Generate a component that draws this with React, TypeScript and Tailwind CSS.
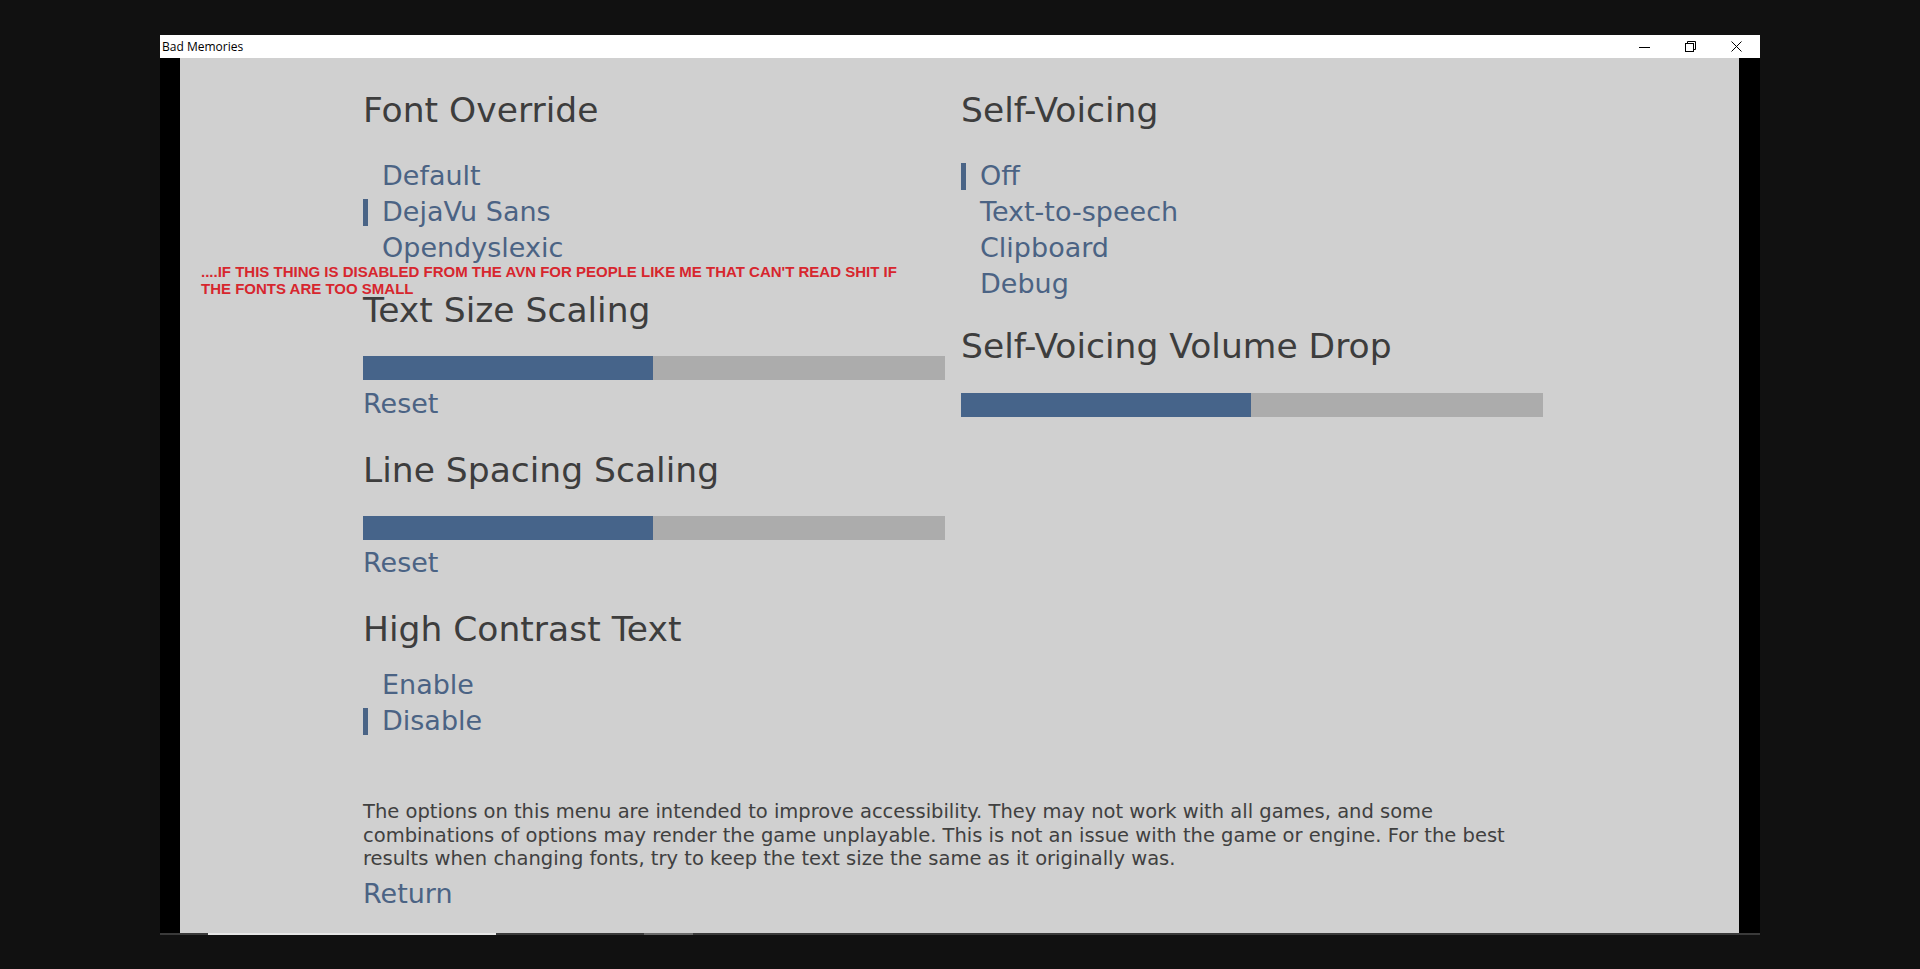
const game = { fontFamily: '"DejaVu Sans", "Liberation Sans", sans-serif' };

type Opt = { label: string; on?: boolean };

const fontOpts: Opt[] = [{ label: "Default" }, { label: "DejaVu Sans", on: true }, { label: "Opendyslexic" }];
const voiceOpts: Opt[] = [{ label: "Off", on: true }, { label: "Text-to-speech" }, { label: "Clipboard" }, { label: "Debug" }];
const contrastOpts: Opt[] = [{ label: "Enable" }, { label: "Disable", on: true }];

function Heading({ children, className = "" }: { children: string; className?: string }) {
  return <h2 className={`text-[34.5px] leading-[41px] text-[#3d3d3d] whitespace-nowrap ${className}`}>{children}</h2>;
}

function Options({ items, className = "" }: { items: Opt[]; className?: string }) {
  return (
    <div className={`flex flex-col ${className}`}>
      {items.map((o) => (
        <div key={o.label} className="flex items-center h-[36px]">
          <div className={`w-[5px] h-[27px] ${o.on ? "bg-[#4a6486]" : "bg-transparent"}`} />
          <span className="ml-[14px] text-[27px] leading-[36px] text-[#4b6384] whitespace-nowrap">{o.label}</span>
        </div>
      ))}
    </div>
  );
}

function Slider({ className = "" }: { className?: string }) {
  return (
    <div className={`w-[582px] h-[24px] bg-[#acacac] ${className}`}>
      <div className="w-[290px] h-full bg-[#46648a]" />
    </div>
  );
}

function Link({ children, className = "" }: { children: string; className?: string }) {
  return <div className={`text-[27px] leading-[36px] text-[#4b6384] ${className}`}>{children}</div>;
}

export default function App() {
  return (
    <div className="w-[1920px] h-[969px] bg-[#111111] pt-[35px] pl-[160px] overflow-hidden">
      <div className="w-[1600px] flex flex-col">
        {/* title bar */}
        <div className="h-[23px] bg-white flex items-center justify-between">
          <span className="pl-[2px] text-[12px] text-black" style={{ fontFamily: '"Open Sans", "Noto Sans", sans-serif' }}>
            Bad Memories
          </span>
          <div className="flex h-full">
            <div className="w-[46px] h-full flex items-center justify-center">
              <svg width="11" height="10" viewBox="0 0 11 10">
                <path d="M0 5.5h11" stroke="#000" strokeWidth="1" />
              </svg>
            </div>
            <div className="w-[46px] h-full flex items-center justify-center">
              <svg width="11" height="11" viewBox="0 0 11 11" fill="none" stroke="#000" strokeWidth="1">
                <rect x="0.5" y="2.5" width="8" height="8" />
                <path d="M2.5 2.5V0.5h8v8h-2" />
              </svg>
            </div>
            <div className="w-[46px] h-full flex items-center justify-center mr-[1px]">
              <svg width="11" height="11" viewBox="0 0 11 11" stroke="#000" strokeWidth="1">
                <path d="M0.5 0.5l10 10M10.5 0.5l-10 10" />
              </svg>
            </div>
          </div>
        </div>

        {/* window body */}
        <div className="h-[875px] flex">
          <div className="w-[20px] bg-black" />
          <div className="relative flex-1 bg-[#d0d0d0] pl-[183px] pt-[32px]" style={game}>
            <div className="grid grid-cols-[582px_582px] gap-x-[16px] items-start">
              <div className="flex flex-col">
                <Heading>Font Override</Heading>
                <Options items={fontOpts} className="mt-[27px]" />
                <Heading className="mt-[24px]">Text Size Scaling</Heading>
                <Slider className="mt-[25px]" />
                <Link className="mt-[6px]">Reset</Link>
                <Heading className="mt-[28px]">Line Spacing Scaling</Heading>
                <Slider className="mt-[25px]" />
                <Link className="mt-[5px]">Reset</Link>
                <Heading className="mt-[28px]">High Contrast Text</Heading>
                <Options items={contrastOpts} className="mt-[17px]" />
              </div>
              <div className="flex flex-col">
                <Heading>Self-Voicing</Heading>
                <Options items={voiceOpts} className="mt-[27px]" />
                <Heading className="mt-[24px]">Self-Voicing Volume Drop</Heading>
                <Slider className="mt-[26px]" />
              </div>
            </div>

            <p className="mt-[61px] w-[1180px] text-[19.5px] leading-[23.5px] text-[#404040]">
              The options on this menu are intended to improve accessibility. They may not work with all games, and some
              combinations of options may render the game unplayable. This is not an issue with the game or engine. For the
              best results when changing fonts, try to keep the text size the same as it originally was.
            </p>
            <Link className="mt-[5px]">Return</Link>

            {/* annotation pasted over the screenshot */}
            <div
              className="absolute left-[21px] top-[205px] text-[15px] leading-[17px] font-bold text-[#d7262e] whitespace-nowrap"
              style={{ fontFamily: '"Liberation Sans", Arial, sans-serif' }}
            >
              ....IF THIS THING IS DISABLED FROM THE AVN FOR PEOPLE LIKE ME THAT CAN'T READ SHIT IF
              <br />
              THE FONTS ARE TOO SMALL
            </div>
          </div>
          <div className="w-[21px] bg-black" />
        </div>

        {/* bottom strip */}
        <div className="h-[2px] bg-[#3a3a3a] flex">
          <div className="ml-[48px] w-[288px] bg-[#e6e6e6]" />
          <div className="ml-[148px] w-[49px] bg-[#6a6a6a]" />
        </div>
      </div>
    </div>
  );
}
